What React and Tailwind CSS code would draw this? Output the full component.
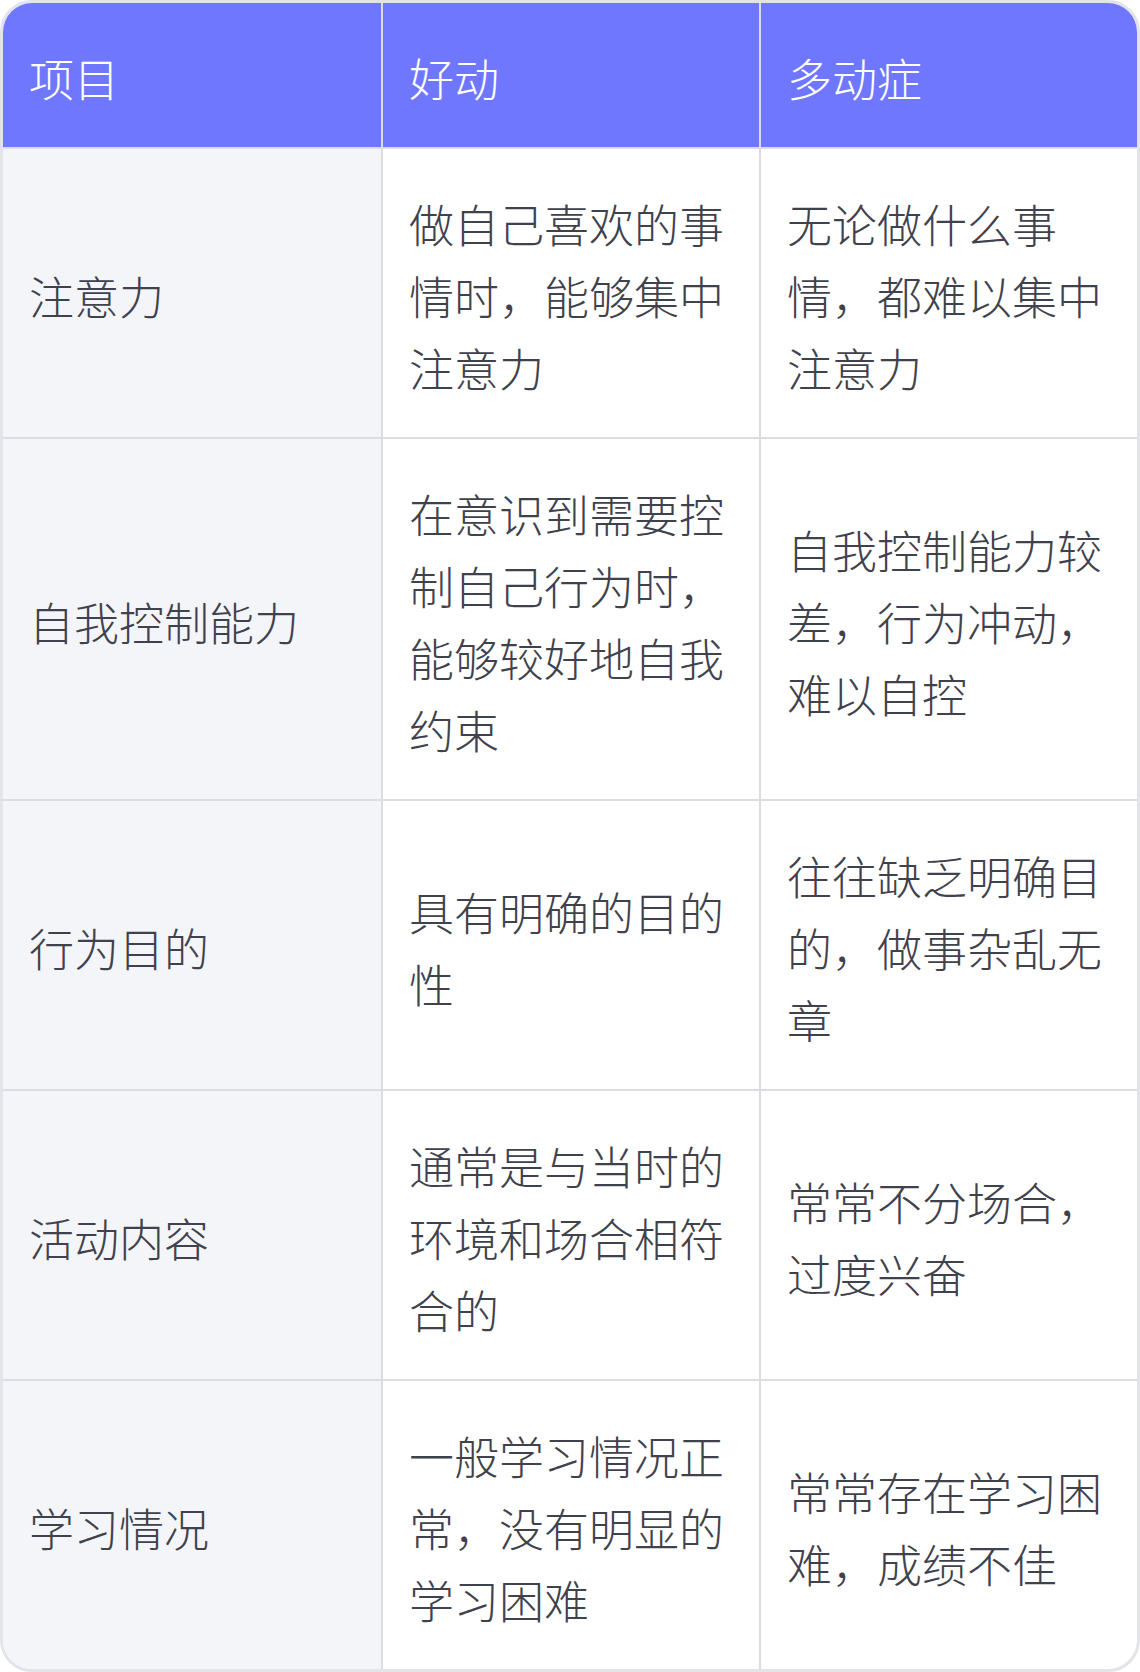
const rows = [
  {
    item: "注意力",
    hyper: "做自己喜欢的事情时，能够集中注意力",
    adhd: "无论做什么事情，都难以集中注意力",
  },
  {
    item: "自我控制能力",
    hyper: "在意识到需要控制自己行为时，能够较好地自我约束",
    adhd: "自我控制能力较差，行为冲动，难以自控",
  },
  {
    item: "行为目的",
    hyper: "具有明确的目的性",
    adhd: "往往缺乏明确目的，做事杂乱无章",
  },
  {
    item: "活动内容",
    hyper: "通常是与当时的环境和场合相符合的",
    adhd: "常常不分场合，过度兴奋",
  },
  {
    item: "学习情况",
    hyper: "一般学习情况正常，没有明显的学习困难",
    adhd: "常常存在学习困难，成绩不佳",
  },
];

const font = { fontFamily: '"Noto Sans CJK SC", "Noto Sans", sans-serif' };

export default function App() {
  return (
    <div className="w-[1140px] h-[1672px] bg-white" style={font}>
      <div className="rounded-[32px] border-[3px] border-[#e3e4e9] overflow-hidden">
        {/* Header */}
        <div className="grid grid-cols-3 bg-[#7077ff] text-white text-[45px] leading-[72px] font-light">
          <div className="px-[26px] pt-[39px] pb-[33px]">项目</div>
          <div className="px-[26px] pt-[39px] pb-[33px] border-l-2 border-[#dcdde3]">好动</div>
          <div className="px-[26px] pt-[39px] pb-[33px] border-l-2 border-[#dcdde3]">多动症</div>
        </div>

        {/* Body */}
        {rows.map((row) => (
          <div
            key={row.item}
            className="grid grid-cols-3 border-t-2 border-[#dcdde3] text-[45px] leading-[72px] text-[#3f424d] font-light"
          >
            <div className="flex items-center px-[26px] pt-[39px] pb-[33px] bg-[#f4f5f9]">
              {row.item}
            </div>
            <div className="flex items-center px-[26px] pt-[39px] pb-[33px] border-l-2 border-[#dcdde3]">
              <p>{row.hyper}</p>
            </div>
            <div className="flex items-center px-[26px] pt-[39px] pb-[33px] border-l-2 border-[#dcdde3]">
              <p>{row.adhd}</p>
            </div>
          </div>
        ))}
      </div>
    </div>
  );
}
